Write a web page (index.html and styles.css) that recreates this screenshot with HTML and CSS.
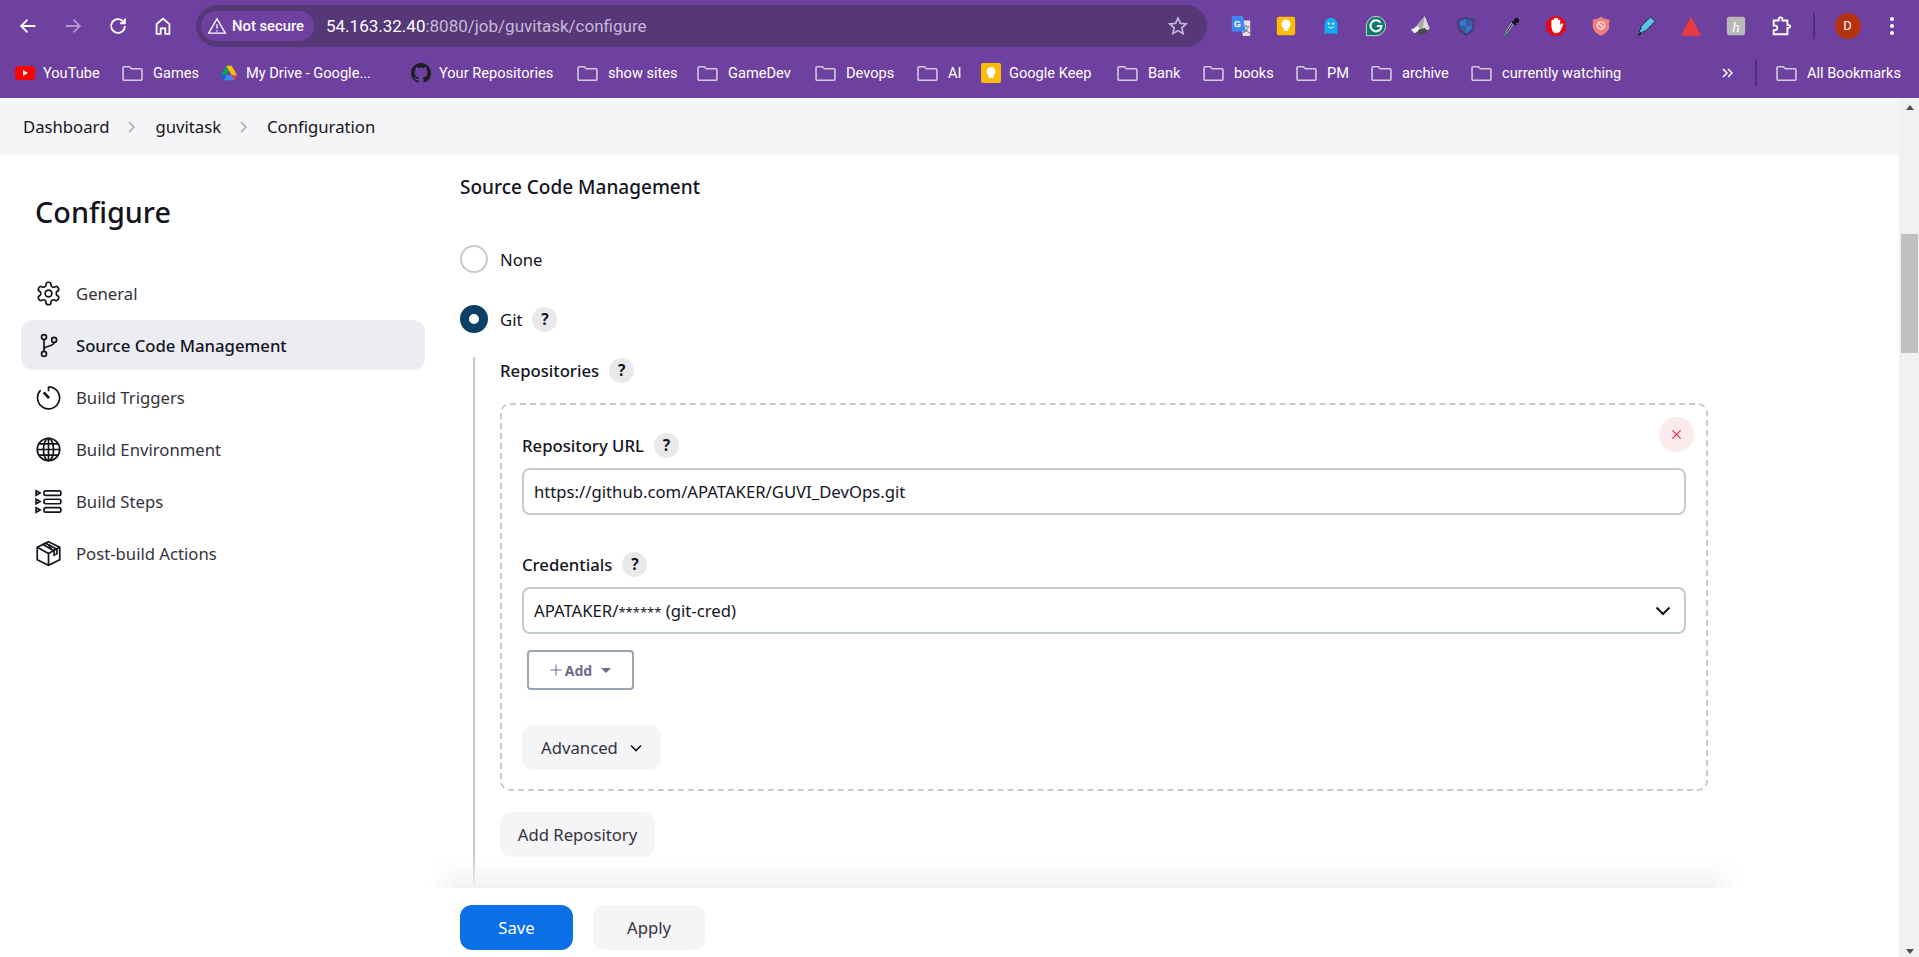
FILE: index.html
```html
<!DOCTYPE html>
<html lang="en">

<head>
  <meta charset="UTF-8" />
  <title>guvitask Config [Jenkins]</title>
  <link rel="stylesheet" href="styles.css">
</head>

<body>

  <header class="browser">
    <div class="toolbar">
      <div class="nav-btn">
        <svg viewBox="0 0 24 24" class="nav-icon"><path d="M20 12H5M11.5 5 4.5 12l7 7" /></svg>
      </div>
      <div class="nav-btn nav-off">
        <svg viewBox="0 0 24 24" class="nav-icon"><path d="M4 12h15M12.5 5l7 7-7 7" /></svg>
      </div>
      <div class="nav-btn">
        <svg viewBox="0 0 24 24" class="nav-icon"><path d="M19.5 12a7.5 7.5 0 1 1-2.2-5.3L19.5 9M19.5 3.8V9h-5.2" /></svg>
      </div>
      <div class="nav-btn">
        <svg viewBox="0 0 24 24" class="nav-icon"><path d="M5 20.5V10l7-6 7 6v10.500h-4.500v-6h-5v6z" /></svg>
      </div>

      <div class="omnibox">
        <div class="secure-pill">
          <svg viewBox="0 0 24 24" class="warn-icon"><path d="M12 3.500 22 20.500H2z" /><path d="M12 10v5M12 17v1.500" /></svg>
          <span>Not secure</span>
        </div>
        <div class="url">54.163.32.40<span class="url-dim">:8080/job/guvitask/configure</span></div>
        <svg viewBox="0 0 24 24" class="star-icon"><path d="m12 3.300 2.600 5.900 6.400.6-4.800 4.200 1.400 6.300-5.600-3.300-5.600 3.300 1.400-6.300L3 9.800l6.400-.6z" /></svg>
      </div>

      <div class="extensions">
        <div class="ext">
          <svg viewBox="0 0 24 24">
            <path d="M11 6h11v17H14z" fill="#e3e3e3" />
            <text x="17.500" y="19" class="ext-cjk">文</text>
            <path d="M2 1h12l3 17H2z" fill="#4285f4" />
            <text x="8" y="13.500" class="ext-g">G</text>
          </svg>
        </div>
        <div class="ext">
          <svg viewBox="0 0 24 24">
            <rect x="2" y="2" width="20" height="20" rx="2" fill="#fbbc04" />
            <circle cx="12" cy="10" r="5" fill="#fff" />
            <rect x="9.500" y="14" width="5" height="3.500" fill="#fff" />
          </svg>
        </div>
        <div class="ext">
          <svg viewBox="0 0 24 24">
            <path d="M5 21V10a7 7 0 0 1 14 0v11l-3-1.500-2 1.500-2-1.500-2 1.500-2-1.500z" fill="#14a9f2" />
            <circle cx="9.500" cy="9.500" r="1.200" fill="#fff" />
            <circle cx="14.500" cy="9.500" r="1.200" fill="#fff" />
            <path d="M9 13q3 2.500 6 0" fill="none" stroke="#fff" />
          </svg>
        </div>
        <div class="ext">
          <svg viewBox="0 0 24 24">
            <path d="M12 1.500a10.500 10.500 0 1 1 0 21H1.500V12A10.500 10.500 0 0 1 12 1.500z" fill="#0f7a6c" stroke="#d8d8d8" />
            <path d="M17 8.500A6 6 0 1 0 18 12h-5" fill="none" stroke="#fff" stroke-width="2.200" />
          </svg>
        </div>
        <div class="ext">
          <svg viewBox="0 0 24 24">
            <path d="M16 1 21 14 9 18 5 14z" fill="#a8a8a8" />
            <path d="M16 1 21 14 14 15z" fill="#dcdcdc" />
            <path d="M1 16l8-4 2 4-6 4z" fill="#f4f4f4" />
            <path d="M9 16l12-3-3 6-5 3-4-2z" fill="#4a4a4a" />
            <path d="M17 14l5-1-2 3-3 0z" fill="#e8e8e8" />
          </svg>
        </div>
        <div class="ext">
          <svg viewBox="0 0 24 24">
            <path d="M12 1.500 21.500 5v7c0 5-4 9-9.500 10.500C6.500 21 2.500 17 2.500 12V5z" fill="#4a3c78" />
            <path d="M12 4v8H5V6.500zM12 12h7c-.5 3.500-3 6.500-7 8z" fill="#2f77d0" />
            <path d="M12 4l7 2.500V12h-7zM12 12v8c-4-1.500-6.500-4.500-7-8z" fill="#3c5a9e" />
          </svg>
        </div>
        <div class="ext">
          <svg viewBox="0 0 24 24">
            <path d="M14 9 7 19" stroke="#d8e8d8" stroke-width="2.500" />
            <path d="M14 9 7 19" stroke="#1c2a1c" stroke-width="1.200" />
            <path d="M7 18l-2 4.500" stroke="#2e9e55" stroke-width="2" />
            <path d="M13.500 7l4 4" stroke="#111" stroke-width="2" />
            <circle cx="18" cy="6" r="2.800" fill="#111" />
          </svg>
        </div>
        <div class="ext">
          <svg viewBox="0 0 24 24">
            <path d="M7.500 1.500h9l6 6v9l-6 6h-9l-6-6v-9z" fill="#e8060f" />
            <path d="M7 13V6.500a1.200 1.200 0 0 1 2.400 0V4.500a1.200 1.200 0 0 1 2.400 0 1.200 1.200 0 0 1 2.400 0v1.500a1.200 1.200 0 0 1 2.400 0v4.500l1.200-1a1.200 1.200 0 0 1 1.700 1.700L17 17c-1 2-2.500 3-4.500 3-3 0-4.500-2-5.500-7z" fill="#fff" />
          </svg>
        </div>
        <div class="ext">
          <svg viewBox="0 0 24 24">
            <path d="M12 2c3 2 6 3 9 3v7c0 5-4 8.500-9 10.500C7 20.500 3 17 3 12V5c3 0 6-1 9-3z" fill="#f08080" />
            <circle cx="12" cy="11.500" r="4" fill="none" stroke="#fbe3e3" stroke-width="1.500" />
            <path d="M9.500 9l5 5" stroke="#fbe3e3" stroke-width="1.500" />
          </svg>
        </div>
        <div class="ext">
          <svg viewBox="0 0 24 24">
            <path d="M6.500 12.500 17 2l5 5-10.500 10.500-2.500.5-2 2L4.500 17.500l2-2z" fill="#5fc3e6" stroke="#10222c" />
            <path d="M2.500 22l3-3 1.500 1.500L5.500 22z" fill="#10222c" />
          </svg>
        </div>
        <div class="ext">
          <svg viewBox="0 0 24 24"><path d="M12 1.500 23 22.500H1z" fill="#e63b3f" /></svg>
        </div>
        <div class="ext">
          <svg viewBox="0 0 24 24">
            <rect x="2" y="2" width="20" height="20" rx="3" fill="#b8b8b8" />
            <text x="12" y="18" class="ext-h">h</text>
          </svg>
        </div>
        <div class="ext">
          <svg viewBox="0 0 24 24">
            <path d="M4 6h5.500V4.500a2 2 0 0 1 4 0V6H19v5h1.500a1.500 1.500 0 0 1 0 3H19v7H4v-4.500h1.500a2.500 2.500 0 0 0 0-5H4z" fill="none" stroke="#fff" stroke-width="2" />
          </svg>
        </div>
      </div>

      <div class="bar-divider"></div>
      <div class="avatar-wrap">
        <div class="avatar">D</div>
      </div>
      <div class="dots">
        <i></i><i></i><i></i>
      </div>
    </div>

    <div class="bookmarks">
      <div class="bm-list">
        <div class="bm">
          <svg viewBox="0 0 20 20" class="bm-icon">
            <rect y="3" width="20" height="14" rx="3.500" fill="#f00" />
            <path d="M8 7l5 3-5 3z" fill="#fff" />
          </svg>
          YouTube
        </div>
        <div class="bm"><svg viewBox="0 0 20 20" class="folder"><use href="#folder" /></svg>Games</div>
        <div class="bm">
          <svg viewBox="0 0 20 20" class="bm-icon bm-drive">
            <path d="M7 2h6l-6 10.500H1z" fill="#0f9d58" />
            <path d="M7 2h6l6 10.500h-6z" fill="#fbbc04" />
            <path d="M4 18l3-5.500h12L16 18z" fill="#4285f4" />
            <path d="M1 12.500h6L4 18z" fill="#0066da" />
            <path d="M13 12.500h6L16 18z" fill="#ea4335" />
          </svg>
          My Drive - Google...
        </div>
        <div class="bm">
          <svg viewBox="0 0 16 16" class="bm-icon">
            <path fill="#1b1f23" d="M8 0C3.580 0 0 3.580 0 8c0 3.540 2.290 6.530 5.470 7.590.4.070.55-.17.55-.38 0-.19-.010-.82-.010-1.490-2.010.370-2.530-.490-2.690-.940-.090-.230-.480-.940-.820-1.130-.280-.150-.680-.520-.010-.530.630-.010 1.080.580 1.230.820.720 1.210 1.870.870 2.330.660.070-.520.280-.870.510-1.070-1.780-.200-3.640-.890-3.640-3.950 0-.870.310-1.590.820-2.150-.080-.200-.360-1.020.080-2.120 0 0 .670-.210 2.200.820.640-.180 1.320-.270 2-.270s1.360.090 2 .270c1.530-1.040 2.200-.820 2.200-.820.440 1.100.160 1.920.080 2.120.510.560.820 1.270.820 2.150 0 3.070-1.870 3.750-3.650 3.950.290.250.540.730.540 1.480 0 1.070-.010 1.930-.010 2.200 0 .210.150.460.550.380A8.010 8.010 0 0 0 16 8c0-4.420-3.580-8-8-8z" />
          </svg>
          Your Repositories
        </div>
        <div class="bm"><svg viewBox="0 0 20 20" class="folder"><use href="#folder" /></svg>show sites</div>
        <div class="bm"><svg viewBox="0 0 20 20" class="folder"><use href="#folder" /></svg>GameDev</div>
        <div class="bm"><svg viewBox="0 0 20 20" class="folder"><use href="#folder" /></svg>Devops</div>
        <div class="bm"><svg viewBox="0 0 20 20" class="folder"><use href="#folder" /></svg>AI</div>
        <div class="bm">
          <svg viewBox="0 0 20 20" class="bm-icon">
            <rect width="20" height="20" rx="2" fill="#fbbc04" />
            <circle cx="10" cy="8.500" r="4.500" fill="#fff" />
            <rect x="7.500" y="12" width="5" height="3" fill="#fff" />
          </svg>
          Google Keep
        </div>
        <div class="bm"><svg viewBox="0 0 20 20" class="folder"><use href="#folder" /></svg>Bank</div>
        <div class="bm"><svg viewBox="0 0 20 20" class="folder"><use href="#folder" /></svg>books</div>
        <div class="bm"><svg viewBox="0 0 20 20" class="folder"><use href="#folder" /></svg>PM</div>
        <div class="bm"><svg viewBox="0 0 20 20" class="folder"><use href="#folder" /></svg>archive</div>
        <div class="bm"><svg viewBox="0 0 20 20" class="folder"><use href="#folder" /></svg>currently watching</div>
      </div>
      <svg viewBox="0 0 12 12" class="more-icon"><path d="M2 2l4 4-4 4M7 2l4 4-4 4" /></svg>
      <div class="bar-divider bm-divider"></div>
      <div class="bm bm-all"><svg viewBox="0 0 20 20" class="folder"><use href="#folder" /></svg>All Bookmarks</div>
    </div>
  </header>

  <svg class="sprites">
    <symbol id="folder" viewBox="0 0 20 20">
      <path d="M1 4.500a1 1 0 0 1 1-1h5l2 2h9a1 1 0 0 1 1 1v9a1 1 0 0 1-1 1H2a1 1 0 0 1-1-1z" fill="none" stroke="#d2cbdc" stroke-width="1.500" />
    </symbol>
  </svg>

  <div class="viewport">
    <div class="page">
      <nav class="breadcrumbs">
        <span>Dashboard</span>
        <svg viewBox="0 0 12 12" class="crumb-sep"><path d="M3 1l5 5-5 5" /></svg>
        <span>guvitask</span>
        <svg viewBox="0 0 12 12" class="crumb-sep"><path d="M3 1l5 5-5 5" /></svg>
        <span>Configuration</span>
      </nav>

      <div class="layout">
        <aside class="sidebar">
          <h1>Configure</h1>
          <div class="side-item">
            <svg viewBox="0 0 24 24" class="side-icon">
              <path d="M12.220 2h-.44a2 2 0 0 0-2 2v.18a2 2 0 0 1-1 1.730l-.43.25a2 2 0 0 1-2 0l-.15-.08a2 2 0 0 0-2.730.73l-.22.38a2 2 0 0 0 .73 2.730l.15.1a2 2 0 0 1 1 1.720v.51a2 2 0 0 1-1 1.740l-.15.09a2 2 0 0 0-.73 2.730l.22.38a2 2 0 0 0 2.730.73l.15-.08a2 2 0 0 1 2 0l.43.25a2 2 0 0 1 1 1.730V20a2 2 0 0 0 2 2h.44a2 2 0 0 0 2-2v-.18a2 2 0 0 1 1-1.730l.43-.25a2 2 0 0 1 2 0l.15.08a2 2 0 0 0 2.730-.73l.22-.39a2 2 0 0 0-.73-2.730l-.15-.08a2 2 0 0 1-1-1.740v-.5a2 2 0 0 1 1-1.740l.15-.09a2 2 0 0 0 .73-2.730l-.22-.38a2 2 0 0 0-2.730-.73l-.15.08a2 2 0 0 1-2 0l-.43-.25a2 2 0 0 1-1-1.730V4a2 2 0 0 0-2-2z" />
              <circle cx="12" cy="12" r="3" />
            </svg>
            General
          </div>
          <div class="side-item side-active">
            <svg viewBox="0 0 24 24" class="side-icon">
              <circle cx="8" cy="4.500" r="2.200" />
              <circle cx="8" cy="19.500" r="2.200" />
              <circle cx="17" cy="7" r="2.200" />
              <path d="M8 6.700v10.600M17 9.200c0 4-9 3-9 6" />
            </svg>
            Source Code Management
          </div>
          <div class="side-item">
            <svg viewBox="0 0 24 24" class="side-icon">
              <path d="M12 2.500a9.800 9.800 0 1 1-7 3" />
              <path d="M12 2.500v4" />
              <path d="M12.500 12.500 7.800 7.500" stroke-width="2.400" />
            </svg>
            Build Triggers
          </div>
          <div class="side-item">
            <svg viewBox="0 0 24 24" class="side-icon">
              <circle cx="12" cy="12" r="10" />
              <ellipse cx="12" cy="12" rx="4.500" ry="10" />
              <path d="M12 2v20M2 12h20M3.500 7h17M3.500 17h17" />
            </svg>
            Build Environment
          </div>
          <div class="side-item">
            <svg viewBox="0 0 24 24" class="side-icon">
              <rect x="8" y="2.500" width="15" height="4" rx="1.500" />
              <rect x="8" y="10" width="15" height="4" rx="1.500" />
              <rect x="8" y="17.500" width="15" height="4" rx="1.500" />
              <path d="M1 2.500 4.500 4.500 1 6.500zM1 10 4.500 12 1 14zM1 17.500 4.500 19.500 1 21.500z" />
            </svg>
            Build Steps
          </div>
          <div class="side-item">
            <svg viewBox="0 0 24 24" class="side-icon">
              <path d="M12 1.500 22 6.500v11L12 22.500 2 17.500v-11z" />
              <path d="M2 6.500 12 12l10-5.500M12 12v10.500" />
              <path d="M7 4l10 5.500v4l2.500-1.200V8.200L9.500 2.800z" />
              <path d="M14.500 8.200 12 4.500" />
            </svg>
            Post-build Actions
          </div>
        </aside>

        <main class="main">
          <h2>Source Code Management</h2>

          <div class="radio-row radio-first">
            <span class="radio"></span>
            None
          </div>
          <div class="radio-row">
            <span class="radio radio-on"></span>
            Git
            <span class="help">?</span>
          </div>

          <div class="nested">
            <div class="field-label">Repositories <span class="help">?</span></div>

            <div class="repeated">
              <button class="close-btn">
                <svg viewBox="0 0 12 12"><path d="M1.500 1.500l9 9M10.500 1.500l-9 9" /></svg>
              </button>

              <div class="field-label">Repository URL <span class="help">?</span></div>
              <div class="input">https://github.com/APATAKER/GUVI_DevOps.git</div>

              <div class="field-label field-gap">Credentials <span class="help">?</span></div>
              <div class="input select">
                <span>APATAKER/<span class="mask">******</span> (git-cred)</span>
                <svg viewBox="0 0 16 10" class="select-arrow"><path d="M1.500 1.500 8 8l6.500-6.500" /></svg>
              </div>

              <button class="add-btn">
                <svg viewBox="0 0 12 12" class="add-plus"><path d="M6 .5v11M.5 6h11" /></svg>
                <span>Add</span>
                <i class="add-caret"></i>
              </button>

              <button class="btn advanced">
                Advanced
                <svg viewBox="0 0 12 8" class="adv-arrow"><path d="M1 1.500 6 6.500l5-5" /></svg>
              </button>
            </div>

            <button class="btn add-repo">Add Repository</button>
          </div>

          <div class="bottom-bar">
            <div class="bottom-shadow"></div>
            <button class="btn save">Save</button>
            <button class="btn apply">Apply</button>
          </div>
        </main>
      </div>
    </div>

    <div class="scrollbar">
      <i class="arrow-up"></i>
      <div class="thumb"></div>
      <i class="arrow-down"></i>
    </div>
  </div>

</body>

</html>
```

FILE: styles.css
```css
* {
  margin: 0;
  padding: 0;
  box-sizing: border-box;
}

body {
  height: 100vh;
  display: flex;
  flex-direction: column;
  overflow: hidden;
  background: #fff;
  color: #14141f;
  font-family: "Noto Sans", "Open Sans", sans-serif;
  font-size: 16.700px;
}

button {
  border: none;
  font-family: inherit;
  color: inherit;
}

.sprites {
  position: absolute;
  width: 0;
  height: 0;
}

/* browser chrome */

.browser {
  height: 98px;
  flex: none;
  background: #6e41a0;
  color: #fff;
  font-family: Roboto, "Noto Sans", sans-serif;
}

.toolbar {
  height: 52px;
  padding: 5px 0 5px 5px;
  display: flex;
  align-items: center;
}

.nav-btn {
  width: 45px;
  height: 42px;
  display: flex;
  align-items: center;
  justify-content: center;
}

.nav-icon {
  width: 22px;
  height: 22px;
  fill: none;
  stroke: #fff;
  stroke-width: 2;
}

.nav-off {
  opacity: 0.45;
}

.omnibox {
  width: 1011px;
  height: 42px;
  margin-left: 11px;
  padding-left: 5px;
  padding-right: 18px;
  display: flex;
  align-items: center;
  background: #563878;
  border-radius: 21px;
}

.secure-pill {
  width: 113px;
  height: 30px;
  padding-left: 6px;
  display: flex;
  align-items: center;
  gap: 5px;
  background: #6e41a0;
  border-radius: 15px;
  font-size: 14.800px;
  font-weight: 500;
}

.warn-icon {
  width: 20px;
  height: 20px;
  fill: none;
  stroke: #fff;
  stroke-width: 1.600;
}

.url {
  margin-left: 12px;
  flex: 1;
  font-size: 17px;
  color: #fff;
}

.url-dim {
  color: #c6b8d6;
}

.star-icon {
  width: 22px;
  height: 22px;
  fill: none;
  stroke: #c6b8d6;
  stroke-width: 1.800;
}

.extensions {
  margin-left: 11px;
  display: flex;
}

.ext {
  width: 45px;
  height: 42px;
  display: flex;
  align-items: center;
  justify-content: center;
}

.ext svg {
  width: 22px;
  height: 22px;
}

.ext-g {
  font: bold 10px "Liberation Sans", sans-serif;
  fill: #fff;
  text-anchor: middle;
}

.ext-cjk {
  font: 9px "Noto Sans CJK SC", sans-serif;
  fill: #666;
  text-anchor: middle;
}

.ext-h {
  font: italic 17px "Liberation Serif", serif;
  fill: #fff;
  text-anchor: middle;
}

.bar-divider {
  width: 2px;
  height: 26px;
  margin-left: 10px;
  background: #4f2f78;
}

.avatar-wrap {
  width: 65px;
  display: flex;
  justify-content: center;
}

.avatar {
  width: 26px;
  height: 26px;
  border-radius: 50%;
  background: #b5310f;
  font-size: 13px;
  line-height: 26px;
  text-align: center;
}

.dots {
  width: 24px;
  display: flex;
  flex-direction: column;
  align-items: center;
  gap: 3px;
}

.dots i {
  width: 4px;
  height: 4px;
  border-radius: 50%;
  background: #fff;
}

.bookmarks {
  height: 42px;
  display: flex;
  align-items: center;
  padding-left: 15px;
  font-size: 14.600px;
}

.bm-list {
  display: grid;
  grid-template-columns: 107px 98px 191px 166px 120px 118px 102px 64px 136px 86px 93px 75px 100px 200px;
  width: 1706px;
}

.bm {
  display: flex;
  align-items: center;
  gap: 8px;
  white-space: nowrap;
}

.bm-icon {
  width: 20px;
  height: 20px;
  flex: none;
}

.bm-drive {
  width: 18px;
}

.folder {
  width: 21px;
  height: 21px;
  margin-right: 2px;
  flex: none;
}

.more-icon {
  width: 12px;
  height: 12px;
  fill: none;
  stroke: #fff;
  stroke-width: 1.500;
}

.bm-divider {
  margin-left: 22px;
}

.bm-all {
  margin-left: 19px;
}

/* jenkins page */

.viewport {
  flex: 1;
  display: flex;
  min-height: 0;
}

.page {
  flex: 1;
  display: flex;
  flex-direction: column;
  min-width: 0;
}

.breadcrumbs {
  height: 57px;
  flex: none;
  padding-left: 23px;
  display: flex;
  align-items: center;
  gap: 17px;
  background: #f5f5f8;
}

.crumb-sep {
  width: 12px;
  height: 12px;
  fill: none;
  stroke: #a5a5b5;
  stroke-width: 1.500;
}

.layout {
  flex: 1;
  display: flex;
  min-height: 0;
}

.sidebar {
  width: 460px;
  flex: none;
  padding-left: 21px;
}

.sidebar h1 {
  margin: 37px 0 36px 14px;
  font-size: 28.800px;
  line-height: 40px;
  font-weight: 500;
}

.side-item {
  width: 404px;
  height: 50px;
  margin-bottom: 2px;
  padding: 1px 0 0 14px;
  display: flex;
  align-items: center;
  gap: 14px;
  border-radius: 12px;
  color: #33333f;
}

.side-active {
  background: #ecedf2;
  color: #14141f;
  font-weight: 500;
}

.side-icon {
  width: 27px;
  height: 27px;
  margin-top: -1px;
  flex: none;
  fill: none;
  stroke: #14141f;
  stroke-width: 1.500;
}

.main {
  flex: 1;
  position: relative;
  min-width: 0;
  padding-top: 20px;
}

.main h2 {
  font-size: 19px;
  line-height: 24px;
  font-weight: 500;
}

.radio-row {
  height: 28px;
  margin-top: 32px;
  display: flex;
  align-items: center;
  gap: 12px;
}

.radio-first {
  margin-top: 46px;
}

.radio {
  width: 28px;
  height: 28px;
  border: 2.500px solid #c3ccd1;
  border-radius: 50%;
}

.radio-on {
  border: 9.500px solid #0b3f66;
  background: #fff;
}

.help {
  width: 25px;
  height: 25px;
  flex: none;
  margin-left: -2px;
  border-radius: 50%;
  background: #e9e9ec;
  font-size: 15.500px;
  font-weight: 700;
  line-height: 25px;
  text-align: center;
}

.nested {
  margin: 24px 0 0 13px;
  padding: 1px 0 0 25px;
  width: 1235px;
  height: 600px;
  border-left: 2px solid #c3ccd1;
}

.field-label {
  height: 24px;
  display: flex;
  align-items: center;
  gap: 10px;
  font-weight: 500;
}

.field-label .help {
  margin-left: 0;
}

.field-gap {
  margin-top: 37px;
}

.repeated {
  position: relative;
  width: 1208px;
  height: 388px;
  margin-top: 21px;
  padding: 28px 20px 0;
  border: 2px dashed #c3ccd1;
  border-radius: 10px;
}

.close-btn {
  position: absolute;
  top: 12px;
  right: 12px;
  width: 35px;
  height: 35px;
  display: flex;
  align-items: center;
  justify-content: center;
  border-radius: 50%;
  background: #fbeaec;
}

.close-btn svg {
  width: 11px;
  height: 11px;
  fill: none;
  stroke: #e6294b;
  stroke-width: 1.300;
}

.input {
  height: 47px;
  margin-top: 11px;
  padding-left: 10px;
  display: flex;
  align-items: center;
  justify-content: space-between;
  border: 2px solid #c3ccd1;
  border-radius: 8px;
}

.select {
  padding-right: 13px;
}

.mask {
  font-size: 13px;
}

.select-arrow {
  width: 16px;
  height: 10px;
  fill: none;
  stroke: #14141f;
  stroke-width: 2;
}

.add-btn {
  width: 107px;
  height: 40px;
  margin: 16px 0 0 5px;
  display: flex;
  align-items: center;
  justify-content: center;
  gap: 3px;
  background: #fff;
  border: 2px solid #9aa5b1;
  border-radius: 4px;
  color: #6d6b8a;
  font-size: 14px;
  font-weight: 700;
}

.add-plus {
  width: 12px;
  height: 12px;
  fill: none;
  stroke: #6d6b8a;
  stroke-width: 1;
}

.add-caret {
  width: 0;
  height: 0;
  margin-left: 6px;
  border-left: 5px solid transparent;
  border-right: 5px solid transparent;
  border-top: 5px solid #6d6b8a;
}

.btn {
  height: 45px;
  display: flex;
  align-items: center;
  justify-content: center;
  background: #f5f5f8;
  border-radius: 12px;
  font-size: 16.700px;
}

.advanced {
  width: 139px;
  margin-top: 35px;
  gap: 12px;
  color: #33333f;
}

.adv-arrow {
  width: 12px;
  height: 8px;
  fill: none;
  stroke: #14141f;
  stroke-width: 1.600;
}

.add-repo {
  width: 155px;
  margin-top: 21px;
  color: #33333f;
}

.bottom-bar {
  position: absolute;
  left: -460px;
  right: 0;
  bottom: 0;
  height: 69px;
  padding: 17px 0 0 460px;
  display: flex;
  gap: 20px;
  background: #fff;
}

.bottom-shadow {
  position: absolute;
  left: 429px;
  width: 1312px;
  top: -30px;
  height: 30px;
  background: linear-gradient(to bottom, rgba(243, 243, 243, 0), #f2f2f2);
  -webkit-mask-image: linear-gradient(to right, transparent, #000 30px, #000 calc(100% - 30px), transparent);
  mask-image: linear-gradient(to right, transparent, #000 30px, #000 calc(100% - 30px), transparent);
}

.save {
  width: 113px;
  background: #0b6fe8;
  color: #fff;
}

.apply {
  width: 112px;
  color: #33333f;
}

/* scrollbar */

.scrollbar {
  width: 20px;
  flex: none;
  padding: 0 1px 0 2px;
  display: flex;
  flex-direction: column;
  align-items: center;
  background: #f1f1f1;
}

.arrow-up {
  margin-top: 7px;
  border-left: 4.500px solid transparent;
  border-right: 4.500px solid transparent;
  border-bottom: 5px solid #505050;
}

.thumb {
  width: 17px;
  height: 119px;
  margin-top: 124px;
  background: #c1c1c1;
}

.arrow-down {
  margin-top: auto;
  margin-bottom: 3px;
  border-left: 4.500px solid transparent;
  border-right: 4.500px solid transparent;
  border-top: 5px solid #505050;
}
```
